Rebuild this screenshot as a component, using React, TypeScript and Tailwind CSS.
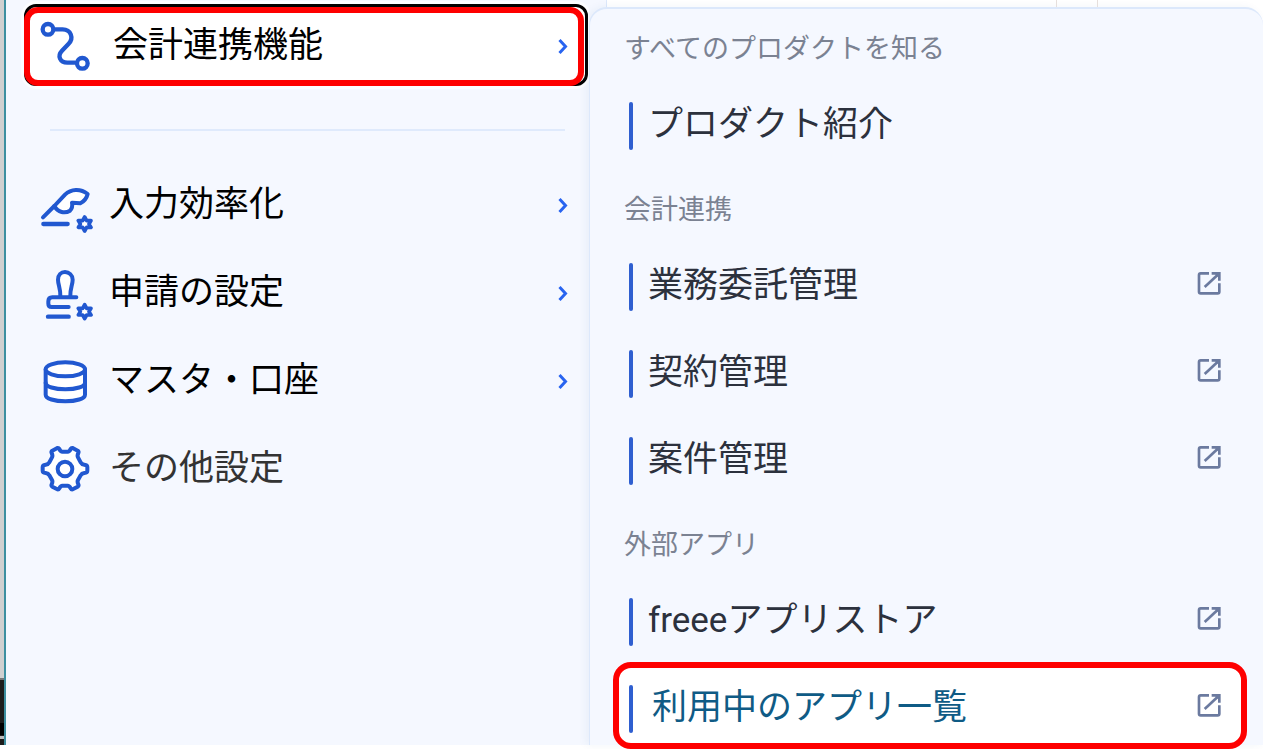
import type { ReactNode } from "react";

const badge = (dy: number) => (
  <g transform={`translate(0 ${dy})`} strokeWidth="11">
    <path
      d="M254 140l6 11h13l-6 10 6 10h-13l-6 11-6-11h-13l6-10-6-10h13z"
      fill="#fff"
    />
  </g>
);

function Glyph({ viewBox, children }: { viewBox: string; children: ReactNode }) {
  return (
    <svg
      viewBox={viewBox}
      className="size-14 shrink-0"
      fill="none"
      stroke="#2158d0"
      strokeWidth="13"
      strokeLinecap="round"
      strokeLinejoin="round"
      aria-hidden="true"
    >
      {children}
    </svg>
  );
}

const linkIcon = (
  <Glyph viewBox="114 54 168 168">
    <path d="M166 88h22c25 0 34 27 18 43l-20 21c-15 16-6 36 16 36h22" />
    <circle cx="144" cy="88" r="16" fill="#fff" />
    <circle cx="247" cy="190" r="16" fill="#fff" />
  </Glyph>
);

const quillIcon = (
  <Glyph viewBox="114 20 168 168">
    <path
      d="M163 107l32-34c18-17 46-19 68-2-3 12-10 22-22 28l-25-2c2 10 1 17-6 24-15 9-36 6-47-14z"
      fill="#fff"
      strokeWidth="12"
    />
    <path d="M129 141l34-34" strokeWidth="12" />
    <path d="M130 161h73" />
    {badge(0)}
  </Glyph>
);

const stampIcon = (
  <Glyph viewBox="114 283 168 168">
    <path
      d="M181 376c1-22-7-34-7-49 0-14 9-23 21-23s23 9 23 23c0 15-8 27-7 49"
      fill="#fff"
      strokeWidth="12"
    />
    <path d="M229 380h-72c-8 0-12 5-12 12v7c0 6 4 10 10 10h51" strokeWidth="12" />
    <path d="M144 438h62" />
    {badge(262)}
  </Glyph>
);

const databaseIcon = (
  <Glyph viewBox="114 38 168 168">
    <g strokeWidth="12">
      <path d="M137 87v76c0 12 27 20 59 20s59-8 59-20V87" fill="#fff" />
      <ellipse cx="196" cy="87" rx="59" ry="21" fill="#fff" />
      <path d="M137 127c0 12 27 20 59 20s59-8 59-20" />
    </g>
  </Glyph>
);

const gearIcon = (
  <Glyph viewBox="114 303 168 168">
    <path
      d="M172 324q4-1 6 3 4 8 9 8h16q5 0 9-8 2-4 6-3l15 8q4 3 2 7-4 8-1 13l8 15q3 6 11 7 9 1 9 7v11q0 6-9 7-8 1-11 7l-8 14q-3 5 1 13 2 4-2 7l-15 8q-4 1-6-3-4-8-9-8h-16q-5 0-9 8-2 4-6 3l-15-8q-4-3-2-7 4-8 1-13l-8-14q-3-6-11-7-9-1-9-7v-11q0-6 9-7 8-1 11-7l8-15q3-5-1-13-2-4 2-7z"
      fill="#fff"
      strokeWidth="12"
    />
    <circle cx="195" cy="387" r="22" strokeWidth="12" />
  </Glyph>
);

function Chevron() {
  return (
    <svg
      viewBox="0 0 22 22"
      className="ml-auto size-[22px] shrink-0"
      fill="none"
      stroke="#2864f0"
      strokeWidth="3"
      aria-hidden="true"
    >
      <path d="M7.5 5l6 6.5-6 6.5" />
    </svg>
  );
}

function ExternalIcon() {
  return (
    <svg
      viewBox="141 65 72 72"
      className="ml-auto size-6 shrink-0"
      fill="none"
      stroke="#6b7a9f"
      strokeWidth="8"
      aria-hidden="true"
    >
      <path d="M177 69h-25q-5 0-5 5v50q0 5 5 5h51q5 0 5-5V99" />
      <path d="M164 110l41-38" />
      <path d="M185 69h23v22" />
      <path d="M192 68h17v17z" fill="#6b7a9f" stroke="none" />
    </svg>
  );
}

const settings = [
  { label: "入力効率化", icon: quillIcon, more: true, color: "text-black" },
  { label: "申請の設定", icon: stampIcon, more: true, color: "text-black" },
  { label: "マスタ・口座", icon: databaseIcon, more: true, color: "text-black" },
  { label: "その他設定", icon: gearIcon, more: false, color: "text-[#333]" },
];

const sections = [
  {
    title: "すべてのプロダクトを知る",
    items: [{ label: "プロダクト紹介", external: false, active: false }],
  },
  {
    title: "会計連携",
    items: [
      { label: "業務委託管理", external: true, active: false },
      { label: "契約管理", external: true, active: false },
      { label: "案件管理", external: true, active: false },
    ],
  },
  {
    title: "外部アプリ",
    items: [
      { label: "freeeアプリストア", external: true, active: false },
      { label: "利用中のアプリ一覧", external: true, active: true },
    ],
  },
];

export default function App() {
  return (
    <div className="bg-white pb-1">
      <div className="flex w-full items-stretch bg-[#f5f8ff] font-['Roboto','Noto_Sans_CJK_JP',sans-serif] font-normal">
        <div className="flex w-1 shrink-0 flex-col bg-[#d0d0d0]" aria-hidden="true">
          <div className="mt-auto h-[67px] border-t-2 border-[#777] bg-[#1d1d1d]">
            <div className="mt-[43px] h-3 bg-black" />
            <div className="mt-px h-[3px] bg-[#bbb]" />
          </div>
        </div>

        <nav
          aria-label="設定メニュー"
          className="flex w-[585px] shrink-0 flex-col border-l-2 border-[#3c8fa0] pt-1"
        >
          <div className="mr-px ml-[18px] rounded-xl border-[3px] border-black bg-white ring-3 ring-white/70">
            <button
              type="button"
              className="-mb-[3px] -ml-[3px] flex h-[79px] w-[560px] items-center rounded-[14px] border-6 border-[#fe0000] bg-white pr-1 pb-0.5 pl-2 text-left"
            >
              {linkIcon}
              <span className="ml-[19px] text-[35px] leading-[48px] text-black">
                会計連携機能
              </span>
              <Chevron />
            </button>
          </div>

          <hr className="mt-[43px] mr-6 ml-11 border-t-2 border-[#dfeafc]" />

          <ul className="mt-[30px] flex flex-col">
            {settings.map((item) => (
              <li key={item.label}>
                <button
                  type="button"
                  className="flex h-[88px] w-full items-center pr-[15px] pl-8 text-left"
                >
                  {item.icon}
                  <span className={`ml-[15px] text-[35px] leading-[48px] ${item.color}`}>
                    {item.label}
                  </span>
                  {item.more && <Chevron />}
                </button>
              </li>
            ))}
          </ul>
        </nav>

        <div className="min-w-0 flex-1 bg-[linear-gradient(to_right,#f5f8ff_17px,#dce8fb_17px,#dce8fb_18px,#fff_18px)]">
          <div className="flex h-[7px] justify-end" aria-hidden="true">
            <div className="mr-[165px] w-[42px] border-x border-[#e6dfdc]" />
          </div>
          <nav
            aria-label="会計連携機能"
            className="flex flex-col gap-6 rounded-t-[18px] border-t-2 border-l border-[#dce8fb] bg-[#f5f8ff] pt-5 pr-4 pl-[23px] shadow-[-3px_0_8px_rgba(40,80,160,0.06)]"
          >
            {sections.map((section) => (
              <section key={section.title}>
                <h2 className="pb-2.5 pl-[11px] text-[27px] leading-10 text-[#7b8292]">
                  {section.title}
                </h2>
                <ul>
                  {section.items.map((item) => (
                    <li key={item.label} className={item.active ? "-mb-1" : ""}>
                      <a
                        href="#"
                        className={
                          item.active
                            ? "flex h-[87px] items-center rounded-[18px] border-6 border-[#fe0000] bg-white pr-5 pl-2.5 text-[#0f5b85]"
                            : "flex h-[87px] items-center border-6 border-transparent pr-5 pl-2.5 text-[#2c313d]"
                        }
                      >
                        <span className="mt-1.5 h-12 w-1 shrink-0 rounded-sm bg-[#2f5fd0]" />
                        <span
                          className={
                            item.active
                              ? "ml-[19px] pt-1 text-[35px] leading-[48px]"
                              : "ml-[15px] pt-1 text-[35px] leading-[48px]"
                          }
                        >
                          {item.label}
                        </span>
                        {item.external && <ExternalIcon />}
                      </a>
                    </li>
                  ))}
                </ul>
              </section>
            ))}
          </nav>
        </div>
      </div>
    </div>
  );
}
